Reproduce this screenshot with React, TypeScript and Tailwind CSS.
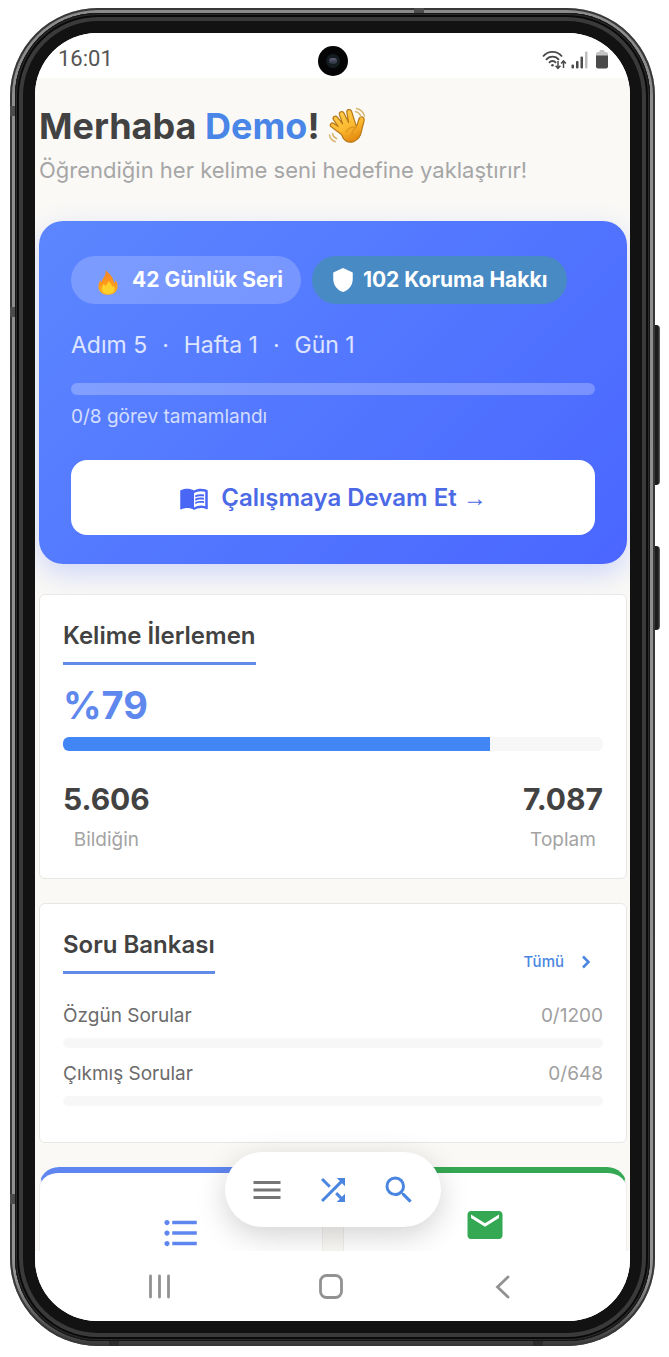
import type { ReactNode } from "react";
import {
  MdEmail,
  MdFormatListBulleted,
  MdMenu,
  MdMenuBook,
  MdSearch,
  MdShield,
  MdShuffle,
} from "react-icons/md";

function WavingHand() {
  return (
    <svg viewBox="0 0 40 40" className="h-10 w-10" aria-hidden="true">
      <defs>
        <linearGradient id="hand" x1="0" y1="0" x2="0.5" y2="1">
          <stop offset="0" stopColor="#ffd15a" />
          <stop offset="0.65" stopColor="#fcb92f" />
          <stop offset="1" stopColor="#e58d12" />
        </linearGradient>
      </defs>
      <g strokeLinecap="round" strokeLinejoin="round">
        <path
          d="M13.5 28.5 3.2 20.8c-2.2-1.9.2-5 2.700-3.300l4.300 3L5.600 13.900c-1.700-2.800 1.800-5.200 3.800-2.700l5.200 6.600-3.100-8.900c-.9-3.200 3.200-4.700 4.600-1.700l4.500 9.200-1.800-10.200c-.3-3 3.900-3.700 4.800-.7l4.700 14.600c1.200-1 1.500-3.100 2.100-5.500.7-2.700 1.600-4.100 3.600-3.700 2.300.5 2.500 2.500 1.900 4.800-.9 3.500-1.600 5.500-2.200 8.800-.9 5.200-3.100 9.300-8.200 11.100-5.600 2-10.200-1.400-12-7.100z"
          fill="url(#hand)"
          stroke="#b87816"
          strokeWidth="1.200"
        />
        <path d="M18 26c2-3.800 5.200-5.600 10.300-4.600M28.300 21.400c-3.300 1.900-4.600 4.400-4.200 7.800" fill="none" stroke="#dd951f" strokeWidth="1.300" />
        <path d="M27.500 5.500c3 .8 4.900 2.800 5.700 5.800M28.500 2.500c4.300 1 6.900 3.500 8 7.600M1.500 29c.7 3.500 2.600 5.700 5.800 6.700M4.500 27.500c.6 2.700 2 4.400 4.300 5.200" fill="none" stroke="#d9b56c" strokeWidth="1.400" />
      </g>
    </svg>
  );
}

function Flame() {
  return (
    <svg viewBox="0 0 20 25" className="mt-1 h-[25px] w-5" aria-hidden="true">
      <defs>
        <linearGradient id="flame" x1="0" y1="0" x2="0" y2="1">
          <stop offset="0" stopColor="#f5822a" />
          <stop offset="0.6" stopColor="#ff9c1b" />
          <stop offset="1" stopColor="#ffb11d" />
        </linearGradient>
      </defs>
      <path
        d="M7.600.5c.3 4-1.400 6.200-2.800 8.600-.7 1.200-1 2.100-1.100 3.300C3 11.700 2.700 11 2.600 10 1.100 12 .4 14.200.4 16.400.4 21.500 4.300 24.700 10 24.700s9.600-3.400 9.600-8.500c0-2.400-.8-4.300-2.100-6.100-.1 1.400-.6 2.400-1.500 3.100C15.800 8.600 12.300 3.700 7.600.5z"
        fill="url(#flame)"
      />
      <path
        d="M9.900 11.300c.2 2.200-1 3.200-2.200 4.500-1.200-.6-1.500-1.500-1.500-2.400-2.200 2.600-2.800 4.700-2.200 6.700.8 2.700 3.200 3.800 6.100 3.800 3.800 0 6.500-2 6.500-5.200 0-1.200-.4-2.300-1.100-3.300-.3.900-.8 1.400-1.600 1.700.1-2.500-1.400-4.600-4-5.800z"
        fill="#ffd12b"
      />
    </svg>
  );
}

function WifiIcon() {
  return (
    <svg viewBox="0 0 25 20" className="h-5 w-[25px]" fill="none" stroke="#4a4a4a" strokeWidth="1.800" aria-label="Wi-Fi">
      <path d="M1 6.500C6 .3 15 .3 20 6.500M4 9.800c3.500-4.200 9.500-4.200 13 0M7 12.800c2-2.400 5-2.400 7 0" />
      <circle cx="10.500" cy="15.200" r="1.300" fill="#4a4a4a" stroke="none" />
      <path d="M16 11v7M13.600 15.700 16 18.300l2.400-2.600M21.500 18v-7M19.100 13.500l2.400-2.600 2.400 2.600" strokeWidth="1.500" />
    </svg>
  );
}

function SignalIcon() {
  return (
    <svg viewBox="0 0 17 18" className="h-[18px] w-[17px]" fill="#4a4a4a" aria-label="Sinyal">
      <rect x="0.500" y="13.500" width="2.500" height="4" rx="1" />
      <rect x="5" y="10" width="2.500" height="7.500" rx="1" />
      <rect x="9.500" y="5.500" width="2.500" height="12" rx="1" />
      <rect x="14" y="0.500" width="2.500" height="17" rx="1" fill="#bdbdbd" />
    </svg>
  );
}

function BatteryIcon() {
  return (
    <svg viewBox="0 0 12 19" className="h-[19px] w-3" aria-label="Pil">
      <path d="M3.500 2V1a1 1 0 0 1 1-1h3a1 1 0 0 1 1 1v1H10a2 2 0 0 1 2 2v2H0V4a2 2 0 0 1 2-2z" fill="#c4c4c4" />
      <path d="M0 5.500h12V16.500a2 2 0 0 1-2 2H2a2 2 0 0 1-2-2z" fill="#4a4a4a" />
    </svg>
  );
}

function StatusBar() {
  return (
    <header className="relative flex h-[45px] items-center justify-between bg-white pr-[22px] pl-[23px]">
      <time className="pt-1.5 font-[Roboto,sans-serif] text-[22px] leading-7 text-[#555]">16:01</time>
      <div className="flex items-center gap-2 pt-2">
        <div className="flex items-center gap-1">
          <WifiIcon />
          <SignalIcon />
        </div>
        <BatteryIcon />
      </div>
      <span className="absolute top-[13px] left-1/2 flex h-[30px] w-[30px] -translate-x-1/2 items-center justify-center rounded-full bg-[#050505]">
        <span className="flex h-3.5 w-3.5 items-center justify-center rounded-full bg-[#141c20]">
          <span className="h-1.5 w-2 rounded-full bg-linear-to-b from-[#66607a] to-[#23323a]" />
        </span>
      </span>
    </header>
  );
}

function Panel({ children, className }: { children: ReactNode; className: string }) {
  return (
    <section className={`mt-6 rounded-md border border-[#e9e7e5] bg-white px-[23px] pt-[25px] ${className}`}>{children}</section>
  );
}

function PanelTitle({ children }: { children: ReactNode }) {
  return (
    <h2 className="w-fit border-b-3 border-[#628ae8] pb-2.5 text-2xl leading-8 font-semibold text-[#424242]">{children}</h2>
  );
}

function Stat({ value, label }: { value: string; label: string }) {
  return (
    <div className="text-center">
      <p className="text-[30px] leading-9 font-bold text-[#424242]">{value}</p>
      <p className="mt-[11px] text-[19px] leading-6 text-[#a3a3a3]">{label}</p>
    </div>
  );
}

function QuestionRow({ label, count }: { label: string; count: string }) {
  return (
    <div>
      <div className="flex justify-between text-[19px] leading-6">
        <span className="text-[#6b6b6b]">{label}</span>
        <span className="text-[#a0a0a0]">{count}</span>
      </div>
      <div className="mt-2.5 h-2.5 rounded-full bg-[#f7f7f7]" />
    </div>
  );
}

function PhoneFrame({ children }: { children: ReactNode }) {
  return (
    <div className="relative rounded-[88px] bg-linear-to-b from-[#8c8c8c] via-[#929292] via-95% to-[#3a3a3a] p-[5px] shadow-[inset_0_0_0_2px_#383838]">
      <span className="absolute top-[317px] -right-[5px] h-40 w-[5px] rounded-r-sm bg-linear-to-r from-[#1c1c1c] from-60% to-[#6a6a6a]" />
      <span className="absolute top-[538px] -right-[5px] h-[84px] w-[5px] rounded-r-sm bg-linear-to-r from-[#1c1c1c] from-60% to-[#6a6a6a]" />
      <span className="absolute top-[98px] left-0 h-2.5 w-[5px] bg-[#4c4c4c]" />
      <span className="absolute top-[299px] left-0 h-2.5 w-[5px] bg-[#4c4c4c]" />
      <span className="absolute bottom-[142px] left-0 h-2.5 w-[5px] bg-[#4c4c4c]" />
      <span className="absolute top-0 left-[404px] h-[5px] w-2.5 bg-[#4c4c4c]" />
      <span className="absolute bottom-0 left-[99px] h-[5px] w-2.5 bg-[#2c2c2c]" />
      <span className="absolute right-[112px] bottom-0 h-[5px] w-2.5 bg-[#2c2c2c]" />
      <div className="rounded-[83px] bg-[#121212] p-5 shadow-[inset_0_0_0_1px_#161616,inset_0_0_0_2px_#2b2b2b,inset_0_0_0_4px_#0a0a0a,inset_0_0_0_8px_#3a3a3a]">
        <div className="relative overflow-hidden rounded-[62px] bg-white">{children}</div>
      </div>
    </div>
  );
}

export default function App() {
  return (
    <div className="bg-white pt-2 pr-3.5 pb-2.5 pl-2.5 font-[Inter,sans-serif]">
      <PhoneFrame>
        <StatusBar />

        <main className="bg-[#faf9f6] pt-6 pr-[3px] pl-1">
          <h1 className="flex items-center text-4xl leading-[48px] font-bold whitespace-pre text-[#424242]">
            Merhaba <span className="text-[#4a86e8]">Demo</span>!
            <span className="ml-2">
              <WavingHand />
            </span>
          </h1>
          <p className="mt-1.5 text-[22px] leading-7 text-[#a6a6a6]">Öğrendiğin her kelime seni hedefine yaklaştırır!</p>

          <section className="mt-[37px] rounded-3xl bg-linear-135 from-[#5c86ff] to-[#4a66ff] px-8 pt-[35px] pb-[29px] text-white shadow-[0_10px_28px_rgba(80,110,255,0.25)]">
            <div className="flex gap-[11px] text-[21px] leading-7 font-bold">
              <div className="flex h-12 items-center gap-3.5 rounded-full bg-white/20 pr-[18px] pl-[27px]">
                <Flame />
                42 Günlük Seri
              </div>
              <div className="flex h-12 items-center gap-[7px] rounded-full bg-[#488ac4] pr-5 pl-[18px]">
                <MdShield className="h-[26px] w-[26px]" aria-hidden="true" />
                102 Koruma Hakkı
              </div>
            </div>
            <p className="mt-[26px] flex gap-[15px] text-[23px] leading-[30px] text-white/80">
              <span>Adım 5</span>
              <span>·</span>
              <span>Hafta 1</span>
              <span>·</span>
              <span>Gün 1</span>
            </p>
            <div className="mt-[23px] h-3 rounded-full bg-white/25" />
            <p className="mt-2.5 text-[19px] leading-6 text-white/75">0/8 görev tamamlandı</p>
            <button
              type="button"
              className="mt-[31px] flex h-[75px] w-full items-center justify-center gap-3 rounded-2xl bg-white text-2xl font-semibold text-[#4c69e6]"
            >
              <MdMenuBook className="h-[30px] w-[30px] text-[#4a66f5]" aria-hidden="true" />
              <span>
                Çalışmaya Devam Et <span className="font-['Liberation_Sans',sans-serif]">→</span>
              </span>
            </button>
          </section>

          <div className="mt-[30px] [&>section:first-child]:mt-0">
            <Panel className="pb-[26px]">
              <PanelTitle>Kelime İlerlemen</PanelTitle>
              <p className="mt-[18px] text-[38px] leading-[44px] font-bold text-[#5f88ee]">%79</p>
              <div className="mt-2.5 h-3.5 overflow-hidden rounded-md bg-[#f7f7f7]">
                <div className="h-full w-[79%] bg-[#4285f4]" />
              </div>
              <div className="mt-[30px] flex justify-between">
                <Stat value="5.606" label="Bildiğin" />
                <Stat value="7.087" label="Toplam" />
              </div>
            </Panel>

            <Panel className="pb-9">
              <div className="flex items-end justify-between">
                <PanelTitle>Soru Bankası</PanelTitle>
                <a href="#sorular" className="mr-[5px] flex items-center gap-2.5 text-[15px] leading-6 font-medium text-[#4a86e0]">
                  Tümü
                  <svg viewBox="0 0 24 24" className="h-6 w-6" fill="none" stroke="currentColor" strokeWidth="2.500" aria-hidden="true">
                    <path d="m9 6.500 5.500 5.500L9 17.500" />
                  </svg>
                </a>
              </div>
              <div className="mt-[30px] flex flex-col gap-3.5">
                <QuestionRow label="Özgün Sorular" count="0/1200" />
                <QuestionRow label="Çıkmış Sorular" count="0/648" />
              </div>
            </Panel>
          </div>

          <div className="mt-6 grid h-[84px] grid-cols-2 gap-5 overflow-hidden">
            <a href="#listeler" aria-label="Listeler" className="flex h-32 justify-center rounded-[20px] border border-t-6 border-[#efeeec] border-t-[#5f86f0] bg-white pt-[39px]">
              <MdFormatListBulleted className="h-[42px] w-[42px] text-[#5f86ee]" />
            </a>
            <a href="#mesajlar" aria-label="Mesajlar" className="flex h-32 justify-center rounded-[20px] border border-t-6 border-[#efeeec] border-t-[#34a853] bg-white pt-[31px]">
              <MdEmail className="h-[42px] w-[42px] text-[#34a853]" />
            </a>
          </div>
        </main>

        <div className="absolute bottom-[94px] left-1/2 flex h-[75px] -translate-x-1/2 items-center gap-[30px] rounded-full bg-white px-6 shadow-[0_8px_30px_rgba(0,0,0,0.18)]">
          <button type="button" aria-label="Menü">
            <MdMenu className="h-9 w-9 text-[#757575]" />
          </button>
          <button type="button" aria-label="Karıştır">
            <MdShuffle className="h-9 w-9 text-[#4a86e0]" />
          </button>
          <button type="button" aria-label="Ara">
            <MdSearch className="h-9 w-9 text-[#4a86e0]" />
          </button>
        </div>

        <nav className="relative flex h-[70px] items-center justify-between bg-white pr-[111px] pl-[108px] text-[#929292]">
          <button type="button" aria-label="Son uygulamalar">
            <svg viewBox="0 0 32 32" className="h-8 w-8" fill="none" stroke="currentColor" strokeWidth="2.800" strokeLinecap="round">
              <path d="M7.500 6v21M16.500 6v21M25.500 6v21" />
            </svg>
          </button>
          <button type="button" aria-label="Ana ekran">
            <svg viewBox="0 0 32 32" className="h-8 w-8" fill="none" stroke="currentColor" strokeWidth="2.800">
              <rect x="5.500" y="5.500" width="21" height="22" rx="6" />
            </svg>
          </button>
          <button type="button" aria-label="Geri">
            <svg viewBox="0 0 32 32" className="h-8 w-8" fill="none" stroke="currentColor" strokeWidth="2.800" strokeLinecap="round">
              <path d="M21 7 10.500 17 21 27" />
            </svg>
          </button>
        </nav>
      </PhoneFrame>
    </div>
  );
}
